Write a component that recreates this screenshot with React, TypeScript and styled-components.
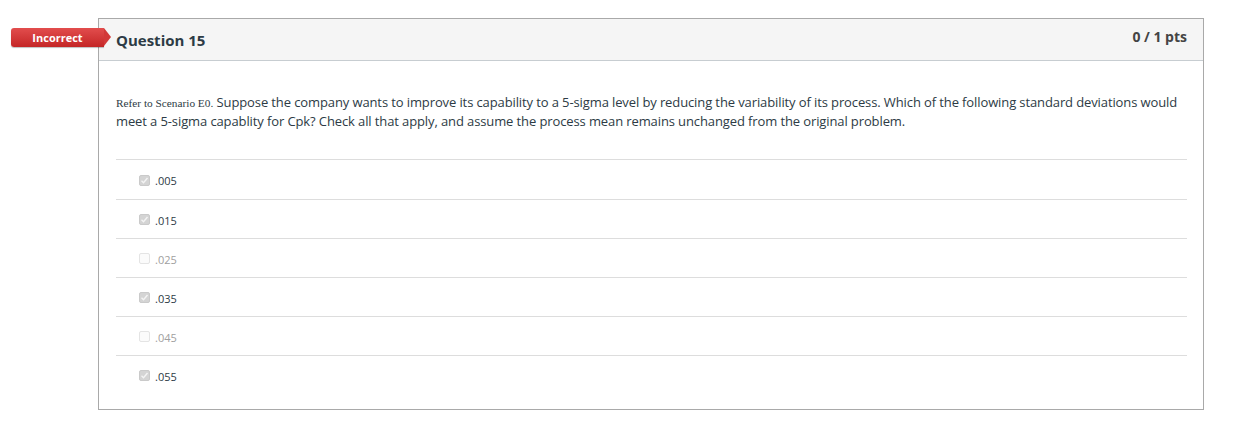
import * as React from 'react';
import styled, { createGlobalStyle } from 'styled-components';

const GlobalStyle = createGlobalStyle`
    html, body {
        margin: 0;
        padding: 0;
        background: #ffffff;
    }
    body {
        font-family: "Open Sans", "Liberation Sans", sans-serif;
        color: #2d3b45;
    }
`;

const Page = styled.div`
    padding: 18px 41px 0 98px;
`;

const Card = styled.div`
    position: relative;
    width: 1106px;
    box-sizing: border-box;
    border: 1px solid #a9a9a9;
`;

const Badge = styled.div`
    position: absolute;
    left: -88px;
    top: 9px;
    height: 19px;
    width: 93px;
    box-sizing: border-box;
    background: linear-gradient(#e24d4d, #c42626);
    border-radius: 3px 0 0 3px;
    color: #fff;
    font-size: 11px;
    font-weight: 700;
    display: flex;
    align-items: center;
    justify-content: center;
    box-shadow: 0 1px 1px rgba(0, 0, 0, 0.25);

    &::after {
        content: '';
        position: absolute;
        right: -7px;
        top: 0;
        border-top: 9.5px solid transparent;
        border-bottom: 9.5px solid transparent;
        border-left: 7px solid #d23838;
    }
`;

const Header = styled.div`
    height: 41px;
    background: #f5f5f5;
    border-bottom: 1px solid #c7cdd1;
    display: flex;
    align-items: center;
    justify-content: space-between;
    padding: 0 16px 0 17px;
`;

const Title = styled.div`
    font-size: 15px;
    font-weight: 700;
    color: #2d3b45;
`;

const Points = styled.div`
    font-size: 14px;
    font-weight: 700;
    color: #444;
    margin-top: -6px;
`;

const Body = styled.div`
    padding: 32px 16px 15px 17px;
`;

const Prompt = styled.div`
    font-size: 13px;
    letter-spacing: -0.11px;
    line-height: 19px;
    color: #2d3b45;
    margin-bottom: 28px;
`;

const Ref = styled.span`
    font-family: "Liberation Serif", "Times New Roman", serif;
    font-size: 11.3px;
    letter-spacing: 0;
    line-height: 1;
`;

const Answers = styled.div`
    border-top: 1px solid #dddddd;
`;

const Row = styled.div`
    height: 39px;
    display: flex;
    align-items: center;
    padding: 2px 0 0 23px;
    box-sizing: border-box;
    gap: 5px;
    border-top: 1px solid #dddddd;
    &:first-child {
        border-top: none;
    }
`;

const Box = styled.span<{ $checked: boolean }>`
    width: 11px;
    height: 11px;
    box-sizing: border-box;
    border-radius: 2px;
    background: ${p => (p.$checked ? '#d4d4d4' : '#fbfbfb')};
    border: 1px solid ${p => (p.$checked ? '#cacaca' : '#e4e4e4')};
    display: flex;
    align-items: center;
    justify-content: center;
    margin-top: -1px;
`;

const Label = styled.span<{ $checked: boolean }>`
    font-size: 11px;
    color: ${p => (p.$checked ? '#2d3b45' : '#a0a0a0')};
`;

const answers = [
    { text: '.005', checked: true },
    { text: '.015', checked: true },
    { text: '.025', checked: false },
    { text: '.035', checked: true },
    { text: '.045', checked: false },
    { text: '.055', checked: true },
];

const Check = () => (
    <svg width="9" height="9" viewBox="0 0 9 9">
        <path d="M1.5 4.8 L3.5 6.8 L7.5 2" fill="none" stroke="#f4f4f4" strokeWidth="1.4" />
    </svg>
);

export default function App() {
    return (
        <Page>
            <GlobalStyle />
            <Card>
                <Badge>Incorrect</Badge>
                <Header>
                    <Title>Question 15</Title>
                    <Points>0 / 1 pts</Points>
                </Header>
                <Body>
                    <Prompt>
                        <Ref>Refer to Scenario E0.</Ref> Suppose the company wants to improve its capability to a 5-sigma level by reducing the variability of its process. Which of the following standard deviations would meet a 5-sigma capablity for Cpk? Check all that apply, and assume the process mean remains unchanged from the original problem.
                    </Prompt>
                    <Answers>
                        {answers.map(a => (
                            <Row key={a.text}>
                                <Box $checked={a.checked}>{a.checked && <Check />}</Box>
                                <Label $checked={a.checked}>{a.text}</Label>
                            </Row>
                        ))}
                    </Answers>
                </Body>
            </Card>
        </Page>
    );
}
